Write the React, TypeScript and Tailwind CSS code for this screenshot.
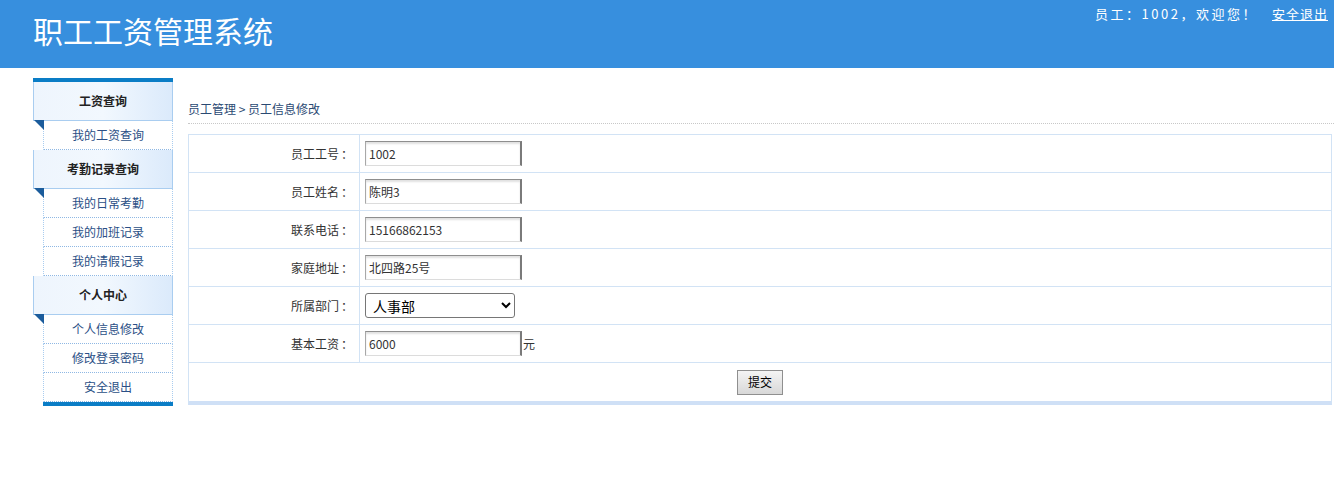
import React from 'react';

const font = { fontFamily: '"Microsoft YaHei", "Noto Sans CJK SC", "Noto Sans", sans-serif' };

type Group = { title: string; items: string[] };

const groups: Group[] = [
  { title: '工资查询', items: ['我的工资查询'] },
  { title: '考勤记录查询', items: ['我的日常考勤', '我的加班记录', '我的请假记录'] },
  { title: '个人中心', items: ['个人信息修改', '修改登录密码', '安全退出'] },
];

const fields = [
  { label: '员工工号', value: '1002' },
  { label: '员工姓名', value: '陈明3' },
  { label: '联系电话', value: '15166862153' },
  { label: '家庭地址', value: '北四路25号' },
];

function TextBox({ value }: { value: string }) {
  return (
    <input
      readOnly
      value={value}
      className="w-[157px] h-[25px] pl-[3px] text-[12px] text-[#333] bg-white border-t border-t-[#8e8e8e] border-l border-l-[#a8a8a8] border-r-2 border-r-[#7a7a7a] border-b border-b-[#dcdcdc] shadow-[inset_0_2px_2px_rgba(0,0,0,0.12)] outline-none"
      style={font}
    />
  );
}

function Row({ label, children }: { label: string; children: React.ReactNode }) {
  return (
    <div className="flex h-[38px] border-b border-[#d2e3f5]">
      <div className="w-[171px] shrink-0 flex items-center justify-end pr-[4px] border-r border-[#d2e3f5] text-[12px] text-[#333]">
        {label}<span className="w-[16px] text-center">：</span>
      </div>
      <div className="flex items-center pl-[5px] text-[12px] text-[#333]">{children}</div>
    </div>
  );
}

export default function App() {
  return (
    <div className="w-[1334px] h-[502px] bg-white overflow-hidden" style={font}>
      {/* 顶部 */}
      <div className="h-[68px] bg-[#378fde] flex justify-between">
        <div className="pl-[33px] pt-[10px] text-[30px] leading-[40px] text-white">职工工资管理系统</div>
        <div className="pr-[6px] pt-[4px] text-[13px] leading-[20px] text-white tracking-[2.5px]">
          员工：1002，欢迎您！
          <a className="ml-[14px] underline tracking-[1px] cursor-pointer">安全退出</a>
        </div>
      </div>

      <div className="flex pt-[10px]">
        {/* 左侧菜单 */}
        <div className="ml-[33px] w-[140px] shrink-0">
          <div className="h-[4px] bg-[#0a7dc6]" />
          {groups.map((g) => (
            <div key={g.title}>
              <div className="relative h-[39px] flex items-center justify-center border-l border-r border-b border-[#a9cdf0] bg-gradient-to-r from-[#eef5fd] via-[#f2f8fe] to-[#dbeafb] text-[12px] font-bold text-[#222]">
                {g.title}
                <span className="absolute left-0 top-full w-0 h-0 border-t-[10px] border-t-[#1b5c9c] border-l-[10px] border-l-transparent" />
              </div>
              {g.items.map((it) => (
                <div
                  key={it}
                  className="ml-[10px] h-[29px] flex items-center justify-center border-l border-r border-[#a9cdf0] border-b border-b-[#8fb8e4] border-dotted text-[12px] text-[#2b4f86]"
                >
                  {it}
                </div>
              ))}
            </div>
          ))}
          <div className="ml-[10px] h-[4px] bg-[#0a7dc6]" />
        </div>

        {/* 主体 */}
        <div className="ml-[15px] flex-1">
          <div className="mt-[16px] h-[30px] flex items-center text-[12px] text-[#2b4a73] border-b border-dotted border-[#c8c8c8]">
            员工管理&nbsp;&gt;&nbsp;员工信息修改
          </div>
          <div className="mt-[10px] mr-[2px] border border-[#d2e3f5] border-b-[4px] border-b-[#cfe0f6]">
            {fields.map((f) => (
              <Row key={f.label} label={f.label}>
                <TextBox value={f.value} />
              </Row>
            ))}
            <Row label="所属部门">
              <select
                className="w-[150px] h-[25px] border border-[#767676] rounded-[3px] bg-white text-[14px] text-black pl-[3px]"
                style={font}
                defaultValue="人事部"
              >
                <option>人事部</option>
                <option>财务部</option>
                <option>技术部</option>
              </select>
            </Row>
            <Row label="基本工资">
              <TextBox value="6000" />
              <span className="ml-[1px] text-[12px]">元</span>
            </Row>
            <div className="h-[38px] flex items-center justify-center">
              <button
                className="w-[46px] h-[25px] border border-[#8f8f8f] bg-gradient-to-b from-[#f4f4f4] to-[#d8d8d8] text-[12px] text-black"
                style={font}
              >
                提交
              </button>
            </div>
          </div>
        </div>
      </div>
    </div>
  );
}
